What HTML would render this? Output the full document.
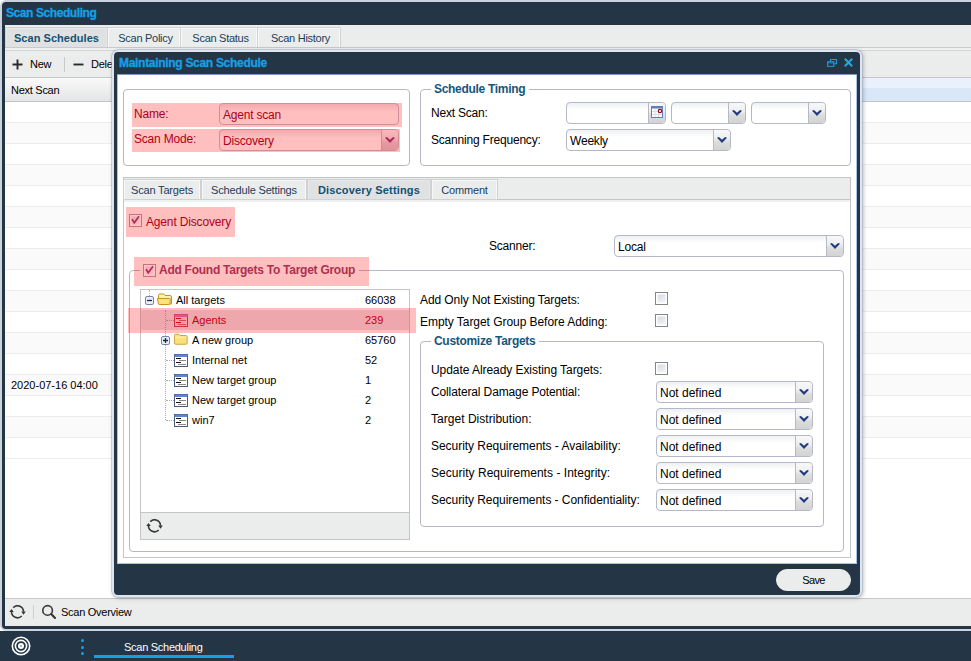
<!DOCTYPE html>
<html><head><meta charset="utf-8"><title>Scan Scheduling</title>
<style>
*{box-sizing:border-box;margin:0;padding:0}
html,body{width:971px;height:661px;overflow:hidden;background:#fff}
body{font-family:"Liberation Sans",sans-serif;font-size:12px;color:#000;position:relative}
.abs{position:absolute}
.t{position:absolute;white-space:nowrap;line-height:14px}
.navy{background:#243546}
/* outer window */
#win{position:absolute;left:0;top:0;width:990px;height:631px;background:#243546;border:2px solid #cbd3de;border-radius:6px 0 0 6px}
#wtitle{-webkit-text-stroke:.3px #14a0e6;left:4px;top:4px;font-weight:bold;color:#14a0e6;font-size:12px;letter-spacing:-.42px}
#wbody{position:absolute;left:3px;top:23px;width:985px;height:601px;background:#fff}
.strip{position:absolute;left:0;top:0;width:100%;height:25px;background:#ebedec;border-bottom:3px solid #eff0f0}
.strip:after{content:"";position:absolute;left:0;right:0;top:22px;height:1px;background:#c9caca}
.tab{position:absolute;top:3px;height:19px;background:#ebedec;border:1px solid #f8f8f8;border-bottom:none;box-shadow:0 0 0 1px #d0d1d1;font-size:11px;letter-spacing:-.27px;line-height:18px;text-align:center;color:#1b3c5a;padding-left:3px}
.s{font-size:11px;letter-spacing:-.27px}
.tab.act{padding-left:0;background:#dfe1e2;font-weight:bold;color:#15506f;border-color:#e6e7e8;letter-spacing:.05px}
#tb{position:absolute;left:0;top:25px;width:100%;height:28px;background:#ebedec;border-bottom:1px solid #c6c7c7}
#hdr{position:absolute;left:0;top:53px;width:100%;height:24px;border-bottom:1px solid #c4c4c4}
#hdr .c1{position:absolute;left:0;top:0;width:300px;height:23px;background:linear-gradient(#f9f9f9,#e4e5e6)}
#hdr .c2{position:absolute;left:300px;top:0;right:0;height:23px;background:linear-gradient(#eaf1fc 0,#eaf1fc 42%,#d8e6f8 43%,#dae7f8 100%)}
.row{position:absolute;left:0;width:100%;height:21px;border-bottom:1px solid #ededed;background:#fff}
.row.alt{background:#fafafa}
#bb{position:absolute;left:0;top:573px;width:100%;height:28px;background:#ebedec;border-top:1px solid #c6c7c7}
/* taskbar */
#task{position:absolute;left:0;top:631px;width:971px;height:30px;background:#243546}
/* dialog */
#dlg{position:absolute;left:112px;top:50px;width:750px;height:547px;background:#243546;border:2px solid #dfe5ee;border-radius:6px;box-shadow:0 0 0 .5px #9fb0c8,1px 1px 4px rgba(0,0,0,.3)}
#dtitle{-webkit-text-stroke:.3px #14a0e6;left:5px;top:4px;font-weight:bold;color:#14a0e6;letter-spacing:-.3px}
#dbody{position:absolute;left:3px;top:22px;width:740px;height:490px;background:#fff;border:1px solid #a9c4ea;border-top:none}
.fs{position:absolute;border:1px solid #b5b8c8;border-radius:4px}
.lg{position:absolute;top:-8px;background:#fff;padding:0 4px 0 3px;font-weight:bold;color:#15567c;white-space:nowrap;line-height:14px;letter-spacing:-.3px}
.inp{position:absolute;letter-spacing:-.2px;height:22px;border:1px solid #b5b8c8;border-radius:4px;background:linear-gradient(#eef0f1 0,#fff 35%);font-size:12px;line-height:20px;padding:1px 0 0 3px;white-space:nowrap;overflow:hidden}
.trg{position:absolute;right:0;top:0;width:17px;height:20px;border-left:1px solid #b5b8c8;background:linear-gradient(#f8f8f8 0,#efefef 40%,#dcdcdc 60%,#d3d3d3 100%);border-radius:0 3px 3px 0}
.trg svg{position:absolute;left:3px;top:7px}
.hl{position:absolute;background:rgba(255,0,0,.25)}
.red{color:#b00018}
.cb{position:absolute;width:13px;height:13px;border:1px solid #858585;background:linear-gradient(160deg,#d2d7df,#f7f8fa);box-shadow:inset 0 0 0 1.500px #fff}
.cb.ck{border-color:#c8707f;background:linear-gradient(160deg,#eda2ad,#fcc0c4);box-shadow:inset 0 0 0 1.500px #ffc3c5}
.dtab{position:absolute;top:2px;height:19px;background:#ebedec;border:1px solid #f8f8f8;border-bottom:none;box-shadow:0 0 0 1px #d0d1d1;font-size:11px;letter-spacing:-.17px;line-height:19px;text-align:center;color:#1b3c5a;white-space:nowrap}
.dtab.act{background:#dfe1e2;font-weight:bold;color:#15506f;border-color:#e6e7e8;letter-spacing:.17px}
.tr{position:absolute;left:0;width:267px;height:20px;font-size:11px}
.tr .n{position:absolute;top:3px;line-height:14px;white-space:nowrap}
.tr .v{position:absolute;left:224px;top:3px;line-height:14px}
</style></head><body>

<div id="win">
 <div class="t" id="wtitle">Scan Scheduling</div>
 <div id="wbody">
  <div class="strip">
   <div class="tab act" style="left:1px;width:101px">Scan Schedules</div>
   <div class="tab" style="left:103px;width:72px">Scan Policy</div>
   <div class="tab" style="left:176px;width:76px">Scan Status</div>
   <div class="tab" style="left:253px;width:82px">Scan History</div>
  </div>
  <div id="tb"><div class="abs" style="left:0;top:0;width:100%;height:1px;background:#d4d5d5"></div>
   <svg class="abs" style="left:7px;top:9px" width="11" height="11" viewBox="0 0 11 11"><path d="M5.500 0.500v10M0.500 5.500h10" stroke="#2a2a2a" stroke-width="1.900" fill="none"/></svg>
   <div class="t s" style="left:25px;top:7px">New</div>
   <div class="abs" style="left:59px;top:7px;width:1px;height:15px;background:#c9c9c9"></div>
   <svg class="abs" style="left:68px;top:9px" width="11" height="11" viewBox="0 0 11 11"><path d="M0.500 5.500h10" stroke="#2a2a2a" stroke-width="1.900" fill="none"/></svg>
   <div class="t s" style="left:86px;top:7px">Delete</div>
  </div>
  <div id="hdr"><div class="c1"></div><div class="c2"></div><div class="t s" style="left:6px;top:5px">Next Scan</div></div>
  <div id="rows">
   <div class="row" style="top:77px"></div>
   <div class="row alt" style="top:98px"></div>
   <div class="row" style="top:119px"></div>
   <div class="row alt" style="top:140px"></div>
   <div class="row" style="top:161px"></div>
   <div class="row alt" style="top:182px"></div>
   <div class="row" style="top:203px"></div>
   <div class="row alt" style="top:224px"></div>
   <div class="row" style="top:245px"></div>
   <div class="row alt" style="top:266px"></div>
   <div class="row" style="top:287px"></div>
   <div class="row alt" style="top:308px"></div>
   <div class="row" style="top:329px"></div>
   <div class="row alt" style="top:350px"><div class="t" style="left:6px;top:3px;font-size:11px">2020-07-16 04:00</div></div>
   <div class="row" style="top:371px"></div>
   <div class="row alt" style="top:392px"></div>
   <div class="row" style="top:413px"></div>
  </div>
  <div id="bb">
   <svg class="abs" style="left:4px;top:6px" width="17" height="15" viewBox="-0.5 0 17 15"><g fill="none" stroke="#383838" stroke-width="1.600"><path d="M3.760 2.560A6 6 0 0 1 14 6.800"/><path d="M12.240 11.040A6 6 0 0 1 2 6.800"/></g><path d="M11.700 6.600h4.600L14 9.700z M-0.300 7h4.600L2 3.900z" fill="#383838"/></svg>
   <div class="abs" style="left:28px;top:6px;width:1px;height:14px;background:#d0d0d0"></div>
   <svg class="abs" style="left:36px;top:5px" width="16" height="16" viewBox="0 0 16 16"><circle cx="6.600" cy="6.400" r="4.800" fill="none" stroke="#383838" stroke-width="1.600"/><path d="M10.200 10L14 13.900" stroke="#383838" stroke-width="2.200" stroke-linecap="round"/></svg>
   <div class="t s" style="left:56px;top:6px">Scan Overview</div>
  </div>
 </div>
</div>

<div id="task">
 <svg class="abs" style="left:11px;top:5px" width="20" height="20" viewBox="0 0 20 20"><g fill="none" stroke="#fff" stroke-width="1.600"><circle cx="10" cy="10" r="8.700"/><circle cx="10" cy="10" r="5.600"/></g><circle cx="10" cy="10" r="3" fill="#fff"/><circle cx="10" cy="10" r="0.900" fill="#8a95a3"/></svg>
 <div class="abs" style="left:81px;top:8px;width:3px;height:3px;border-radius:2px;background:#14a0e6"></div>
 <div class="abs" style="left:81px;top:14.500px;width:3px;height:3px;border-radius:2px;background:#14a0e6"></div>
 <div class="abs" style="left:81px;top:21px;width:3px;height:3px;border-radius:2px;background:#14a0e6"></div>
 <div class="t s" style="left:124px;top:9px;color:#fff">Scan Scheduling</div>
 <div class="abs" style="left:94px;top:24px;width:140px;height:3px;background:#14a0e6"></div>
</div>

<div id="dlg">
 <div class="t" id="dtitle">Maintaining Scan Schedule</div>
 <svg class="abs" style="left:713px;top:7px" width="10" height="8" viewBox="0 0 10 9" preserveAspectRatio="none"><g fill="none" stroke="#18a0e2" stroke-width="1.1"><path d="M3.500 3V0.600h5.900v4.800H7"/><rect x="0.600" y="3.100" width="6.200" height="5.200"/><path d="M0.600 4.300h6.200" stroke-width="0.900"/></g></svg>
 <svg class="abs" style="left:730px;top:6px" width="9" height="9" viewBox="0 0 9 9"><path d="M0.800 0.800l7.400 7.400M8.200 0.800l-7.400 7.400" stroke="#22a8e6" stroke-width="2.100" fill="none"/></svg>
 <div id="dbody"><div class="abs" style="left:-1px;top:0;width:740px;height:1px;background:#7f9cc8"></div>
  <!-- left fieldset -->
  <div class="fs" style="left:5px;top:15px;width:287px;height:77px"></div>
  <div class="hl" style="left:14px;top:29px;width:270px;height:24px"></div>
  <div class="hl" style="left:14px;top:55px;width:268px;height:23px"></div>
  <div class="t red" style="left:16px;top:33px;letter-spacing:-.2px">Name:</div>
  <div class="t red" style="left:16px;top:58px;letter-spacing:-.2px">Scan Mode:</div>
  <div class="inp red" style="padding-top:1px;left:101px;top:29px;width:180px;background:linear-gradient(#f3a9ae 0,#ffbfbf 40%);border-color:#d38d99">Agent scan</div>
  <div class="inp red" style="padding-top:1px;left:101px;top:55px;width:180px;background:linear-gradient(#f3a9ae 0,#ffbfbf 40%);border-color:#d38d99">Discovery<div class="trg" style="background:linear-gradient(#f9b7ba 0,#f2acb0 45%,#e79aa2 60%,#e0929b 100%);border-color:#d38d99"><svg width="10" height="6" viewBox="0 0 10 6"><path d="M0 0.800L1.900 0L5 2.700L8.100 0L10 0.800L5 6z" fill="#b0285a"/></svg></div></div>
  <!-- right fieldset -->
  <div class="fs" style="left:302px;top:15px;width:431px;height:77px"><div class="lg" style="left:10px">Schedule Timing</div></div>
  <div class="t" style="left:313px;top:32px;letter-spacing:-.2px">Next Scan:</div>
  <div class="t" style="left:313px;top:59px;letter-spacing:-.2px">Scanning Frequency:</div>
  <div class="inp" style="left:448px;top:28px;width:100px"><div class="trg"><svg style="left:2px;top:3px" width="12" height="12" viewBox="0 0 12 12"><rect x="0.500" y="0.500" width="11" height="11" fill="#fff" stroke="#5f80b8"/><rect x="0.500" y="0.500" width="11" height="2" fill="#5f80b8"/><path d="M4 3v8M7.500 3v8M1 5.500h10M1 8.500h10" stroke="#dcdde2" stroke-width="1" fill="none"/><circle cx="9" cy="5" r="1.700" fill="#fff" stroke="#9c0818" stroke-width="1.200"/></svg></div></div>
  <div class="inp" style="left:553px;top:28px;width:75px"><div class="trg"><svg width="10" height="6" viewBox="0 0 10 6"><path d="M0 0.800L1.900 0L5 2.700L8.100 0L10 0.800L5 6z" fill="#1f3a80"/></svg></div></div>
  <div class="inp" style="left:633px;top:28px;width:75px"><div class="trg"><svg width="10" height="6" viewBox="0 0 10 6"><path d="M0 0.800L1.900 0L5 2.700L8.100 0L10 0.800L5 6z" fill="#1f3a80"/></svg></div></div>
  <div class="inp" style="left:448px;top:55px;width:165px">Weekly<div class="trg"><svg width="10" height="6" viewBox="0 0 10 6"><path d="M0 0.800L1.900 0L5 2.700L8.100 0L10 0.800L5 6z" fill="#1f3a80"/></svg></div></div>

  <!-- tab panel -->
  <div class="abs" id="tp" style="left:5px;top:103px;width:728px;height:381px;border:1px solid #c4c5c6;background:#fff">
   <div class="abs" style="left:0;top:0;width:726px;height:22px;background:#ebedec;border-bottom:1px solid #c4c5c6"></div>
   <div class="abs" style="left:0;top:22px;width:726px;height:2px;background:#eff0f0"></div>
   <div class="dtab" style="left:0px;width:76px">Scan Targets</div>
   <div class="dtab" style="left:78px;width:104px">Schedule Settings</div>
   <div class="dtab act" style="left:184px;width:122px">Discovery Settings</div>
   <div class="dtab" style="left:308px;width:65px">Comment</div>

   <div class="hl" style="left:2px;top:29px;width:109px;height:30px"></div>
   <div class="cb ck" style="left:5px;top:36px"><svg class="abs" style="left:0;top:0" width="11" height="11" viewBox="0 0 11 11"><path d="M2 4.200l2.300 3.600L9 1.200" stroke="#b02a58" stroke-width="1.600" fill="none"/></svg></div>
   <div class="t red" style="left:22px;top:37px;letter-spacing:-0.16px">Agent Discovery</div>
   <div class="t" style="left:365px;top:61px;letter-spacing:-0.2px">Scanner:</div>
   <div class="inp" style="left:490px;top:57px;width:230px">Local<div class="trg"><svg width="10" height="6" viewBox="0 0 10 6"><path d="M0 0.800L1.900 0L5 2.700L8.100 0L10 0.800L5 6z" fill="#1f3a80"/></svg></div></div>
   <div class="fs" style="left:5px;top:92px;width:715px;height:282px"></div>
   <div class="abs" style="left:16px;top:85px;width:219px;height:14px;background:#fff"></div>
   <div class="hl" style="left:10px;top:79px;width:235px;height:29px"></div>
   <div class="cb ck" style="left:19px;top:86px"><svg class="abs" style="left:0;top:0" width="11" height="11" viewBox="0 0 11 11"><path d="M2 4.200l2.300 3.600L9 1.200" stroke="#b02a58" stroke-width="1.600" fill="none"/></svg></div>
   <div class="t" style="left:35px;top:85px;font-weight:bold;color:#ad3050;letter-spacing:-.26px">Add Found Targets To Target Group</div>
   <div class="abs" id="tree" style="left:16px;top:111px;width:270px;height:251px;border:1px solid #c4c5c6;background:#fff">
    <div class="abs" style="left:0;top:20px;width:268px;height:20px;background:#e9dfe6"></div>
    <div class="abs" style="left:8px;top:0;width:0;height:6px;border-left:1px dotted #bbb"></div>
    <div class="abs" style="left:24px;top:20px;width:0;height:110px;border-left:1px dotted #aaa"></div>
    <div class="abs" style="left:25px;top:30px;width:8px;height:0;border-top:1px dotted #aaa"></div>
    <div class="abs" style="left:25px;top:70px;width:8px;height:0;border-top:1px dotted #aaa"></div>
    <div class="abs" style="left:25px;top:90px;width:8px;height:0;border-top:1px dotted #aaa"></div>
    <div class="abs" style="left:25px;top:110px;width:8px;height:0;border-top:1px dotted #aaa"></div>
    <div class="abs" style="left:25px;top:130px;width:8px;height:0;border-top:1px dotted #aaa"></div>
     <div class="tr" style="top:0px"><svg class="abs" style="left:4px;top:6px" width="9" height="9" viewBox="0 0 9 9"><rect x="0.500" y="0.500" width="8" height="8" rx="1.500" fill="#e9eef7" stroke="#7287ab"/><path d="M2 4.500h5" stroke="#1c2a4a" stroke-width="1.300"/></svg><svg class="abs" style="left:16px;top:3px" width="15" height="12" viewBox="0 0 15 12"><path d="M1.500 11V2.500q0-1.500 1.500-1.500h3.500q1 0 1.500 1.500h5q1.500 0 1.500 1.500v7z" fill="#fdf3a8" stroke="#c69222"/><path d="M0.500 5.500h12q1 0 0.900 1l-0.500 3.800q-0.200 1.200-1.400 1.200h-9q-1 0-1.200-1.200z" fill="#fbe27c" stroke="#c69222"/></svg><span class="n" style="left:35px">All targets</span><span class="v">66038</span></div>
     <div class="tr red" style="top:20px"><svg class="abs" style="left:33px;top:4px" width="14" height="13" viewBox="0 0 14 13"><rect x="0.500" y="0.500" width="13" height="12" fill="#fbd0d4" stroke="#c0405a"/><rect x="0.500" y="0.500" width="13" height="2.500" fill="#c879c0"/><path d="M2 4.500h5M2 8.500h5" stroke="#c00818" stroke-width="1" fill="none"/><path d="M5 6.500h7M4 10.500h8" stroke="#d06070" stroke-width="1" fill="none"/></svg><span class="n" style="left:51px">Agents</span><span class="v">239</span></div>
     <div class="tr" style="top:40px"><svg class="abs" style="left:20px;top:6px" width="9" height="9" viewBox="0 0 9 9"><rect x="0.500" y="0.500" width="8" height="8" rx="1.500" fill="#e9eef7" stroke="#7287ab"/><path d="M2 4.500h5M4.500 2v5" stroke="#1c2a4a" stroke-width="1.300"/></svg><svg class="abs" style="left:33px;top:3px" width="14" height="12" viewBox="0 0 16 13"><path d="M0.5 2.500q0-1.500 1.500-1.500h3.500l1.500 1.500h6.500q1.500 0 1.500 1.500v7q0 1.500-1.500 1.500h-11.500q-1.500 0-1.500-1.500z" fill="#fbe07a" stroke="#c29a30"/><path d="M1.500 4.500h13" stroke="#fff3bf" stroke-width="1"/></svg><span class="n" style="left:51px">A new group</span><span class="v">65760</span></div>
     <div class="tr" style="top:60px"><svg class="abs" style="left:33px;top:4px" width="14" height="13" viewBox="0 0 14 13"><rect x="0.500" y="0.500" width="13" height="12" fill="#fff" stroke="#4a5a78"/><rect x="0.500" y="0.500" width="13" height="2.500" fill="#5b86d6"/><path d="M2 4.500h5M2 8.500h5" stroke="#111" stroke-width="1" fill="none"/><path d="M5 6.500h7M4 10.500h8" stroke="#8a8a8a" stroke-width="1" fill="none"/></svg><span class="n" style="left:51px">Internal net</span><span class="v">52</span></div>
     <div class="tr" style="top:80px"><svg class="abs" style="left:33px;top:4px" width="14" height="13" viewBox="0 0 14 13"><rect x="0.500" y="0.500" width="13" height="12" fill="#fff" stroke="#4a5a78"/><rect x="0.500" y="0.500" width="13" height="2.500" fill="#5b86d6"/><path d="M2 4.500h5M2 8.500h5" stroke="#111" stroke-width="1" fill="none"/><path d="M5 6.500h7M4 10.500h8" stroke="#8a8a8a" stroke-width="1" fill="none"/></svg><span class="n" style="left:51px">New target group</span><span class="v">1</span></div>
     <div class="tr" style="top:100px"><svg class="abs" style="left:33px;top:4px" width="14" height="13" viewBox="0 0 14 13"><rect x="0.500" y="0.500" width="13" height="12" fill="#fff" stroke="#4a5a78"/><rect x="0.500" y="0.500" width="13" height="2.500" fill="#5b86d6"/><path d="M2 4.500h5M2 8.500h5" stroke="#111" stroke-width="1" fill="none"/><path d="M5 6.500h7M4 10.500h8" stroke="#8a8a8a" stroke-width="1" fill="none"/></svg><span class="n" style="left:51px">New target group</span><span class="v">2</span></div>
     <div class="tr" style="top:120px"><svg class="abs" style="left:33px;top:4px" width="14" height="13" viewBox="0 0 14 13"><rect x="0.500" y="0.500" width="13" height="12" fill="#fff" stroke="#4a5a78"/><rect x="0.500" y="0.500" width="13" height="2.500" fill="#5b86d6"/><path d="M2 4.500h5M2 8.500h5" stroke="#111" stroke-width="1" fill="none"/><path d="M5 6.500h7M4 10.500h8" stroke="#8a8a8a" stroke-width="1" fill="none"/></svg><span class="n" style="left:51px">win7</span><span class="v">2</span></div>
    <div class="abs" style="left:0;top:222px;width:268px;height:27px;background:#ebedec;border-top:1px solid #c4c5c6">
     <svg class="abs" style="left:5px;top:6px" width="17" height="15" viewBox="-0.5 0 17 15"><g fill="none" stroke="#383838" stroke-width="1.600"><path d="M3.760 2.560A6 6 0 0 1 14 6.800"/><path d="M12.240 11.040A6 6 0 0 1 2 6.800"/></g><path d="M11.700 6.600h4.600L14 9.700z M-0.300 7h4.600L2 3.900z" fill="#383838"/></svg>
    </div>
   </div>
   <div class="abs" style="left:4px;top:130px;width:288px;height:25px;background:rgba(255,0,0,.25)"></div>
   <div class="t" style="left:296px;top:115px;letter-spacing:-0.09px">Add Only Not Existing Targets:</div>
   <div class="cb" style="left:531px;top:114px"></div>
   <div class="t" style="left:296px;top:137px;letter-spacing:-0.05px">Empty Target Group Before Adding:</div>
   <div class="cb" style="left:531px;top:136px"></div>
   <div class="fs" style="left:296px;top:163px;width:404px;height:186px"><div class="lg" style="left:10px">Customize Targets</div></div>
   <div class="t" style="left:307px;top:185px;letter-spacing:-0.06px">Update Already Existing Targets:</div>
   <div class="cb" style="left:531px;top:184px"></div>
   <div class="t" style="left:307px;top:207px;letter-spacing:-0.13px">Collateral Damage Potential:</div>
   <div class="t" style="left:307px;top:234px;letter-spacing:0.03px">Target Distribution:</div>
   <div class="t" style="left:307px;top:261px;letter-spacing:-0.04px">Security Requirements - Availability:</div>
   <div class="t" style="left:307px;top:288px;letter-spacing:0.03px">Security Requirements - Integrity:</div>
   <div class="t" style="left:307px;top:315px;letter-spacing:-0.05px">Security Requirements - Confidentiality:</div>
   <div class="inp" style="left:532px;top:203px;width:157px;letter-spacing:0">Not defined<div class="trg"><svg width="10" height="6" viewBox="0 0 10 6"><path d="M0 0.800L1.900 0L5 2.700L8.100 0L10 0.800L5 6z" fill="#1f3a80"/></svg></div></div>
   <div class="inp" style="left:532px;top:230px;width:157px;letter-spacing:0">Not defined<div class="trg"><svg width="10" height="6" viewBox="0 0 10 6"><path d="M0 0.800L1.900 0L5 2.700L8.100 0L10 0.800L5 6z" fill="#1f3a80"/></svg></div></div>
   <div class="inp" style="left:532px;top:257px;width:157px;letter-spacing:0">Not defined<div class="trg"><svg width="10" height="6" viewBox="0 0 10 6"><path d="M0 0.800L1.900 0L5 2.700L8.100 0L10 0.800L5 6z" fill="#1f3a80"/></svg></div></div>
   <div class="inp" style="left:532px;top:284px;width:157px;letter-spacing:0">Not defined<div class="trg"><svg width="10" height="6" viewBox="0 0 10 6"><path d="M0 0.800L1.900 0L5 2.700L8.100 0L10 0.800L5 6z" fill="#1f3a80"/></svg></div></div>
   <div class="inp" style="left:532px;top:311px;width:157px;letter-spacing:0">Not defined<div class="trg"><svg width="10" height="6" viewBox="0 0 10 6"><path d="M0 0.800L1.900 0L5 2.700L8.100 0L10 0.800L5 6z" fill="#1f3a80"/></svg></div></div>
  </div>
 </div>
 <div class="abs" style="left:662px;top:517px;width:75px;height:22px;border-radius:11px;background:#ebedec;border:1px solid #ebedec;text-align:center;line-height:20px;font-size:11px;letter-spacing:-.6px">Save</div>
</div>

</body></html>
